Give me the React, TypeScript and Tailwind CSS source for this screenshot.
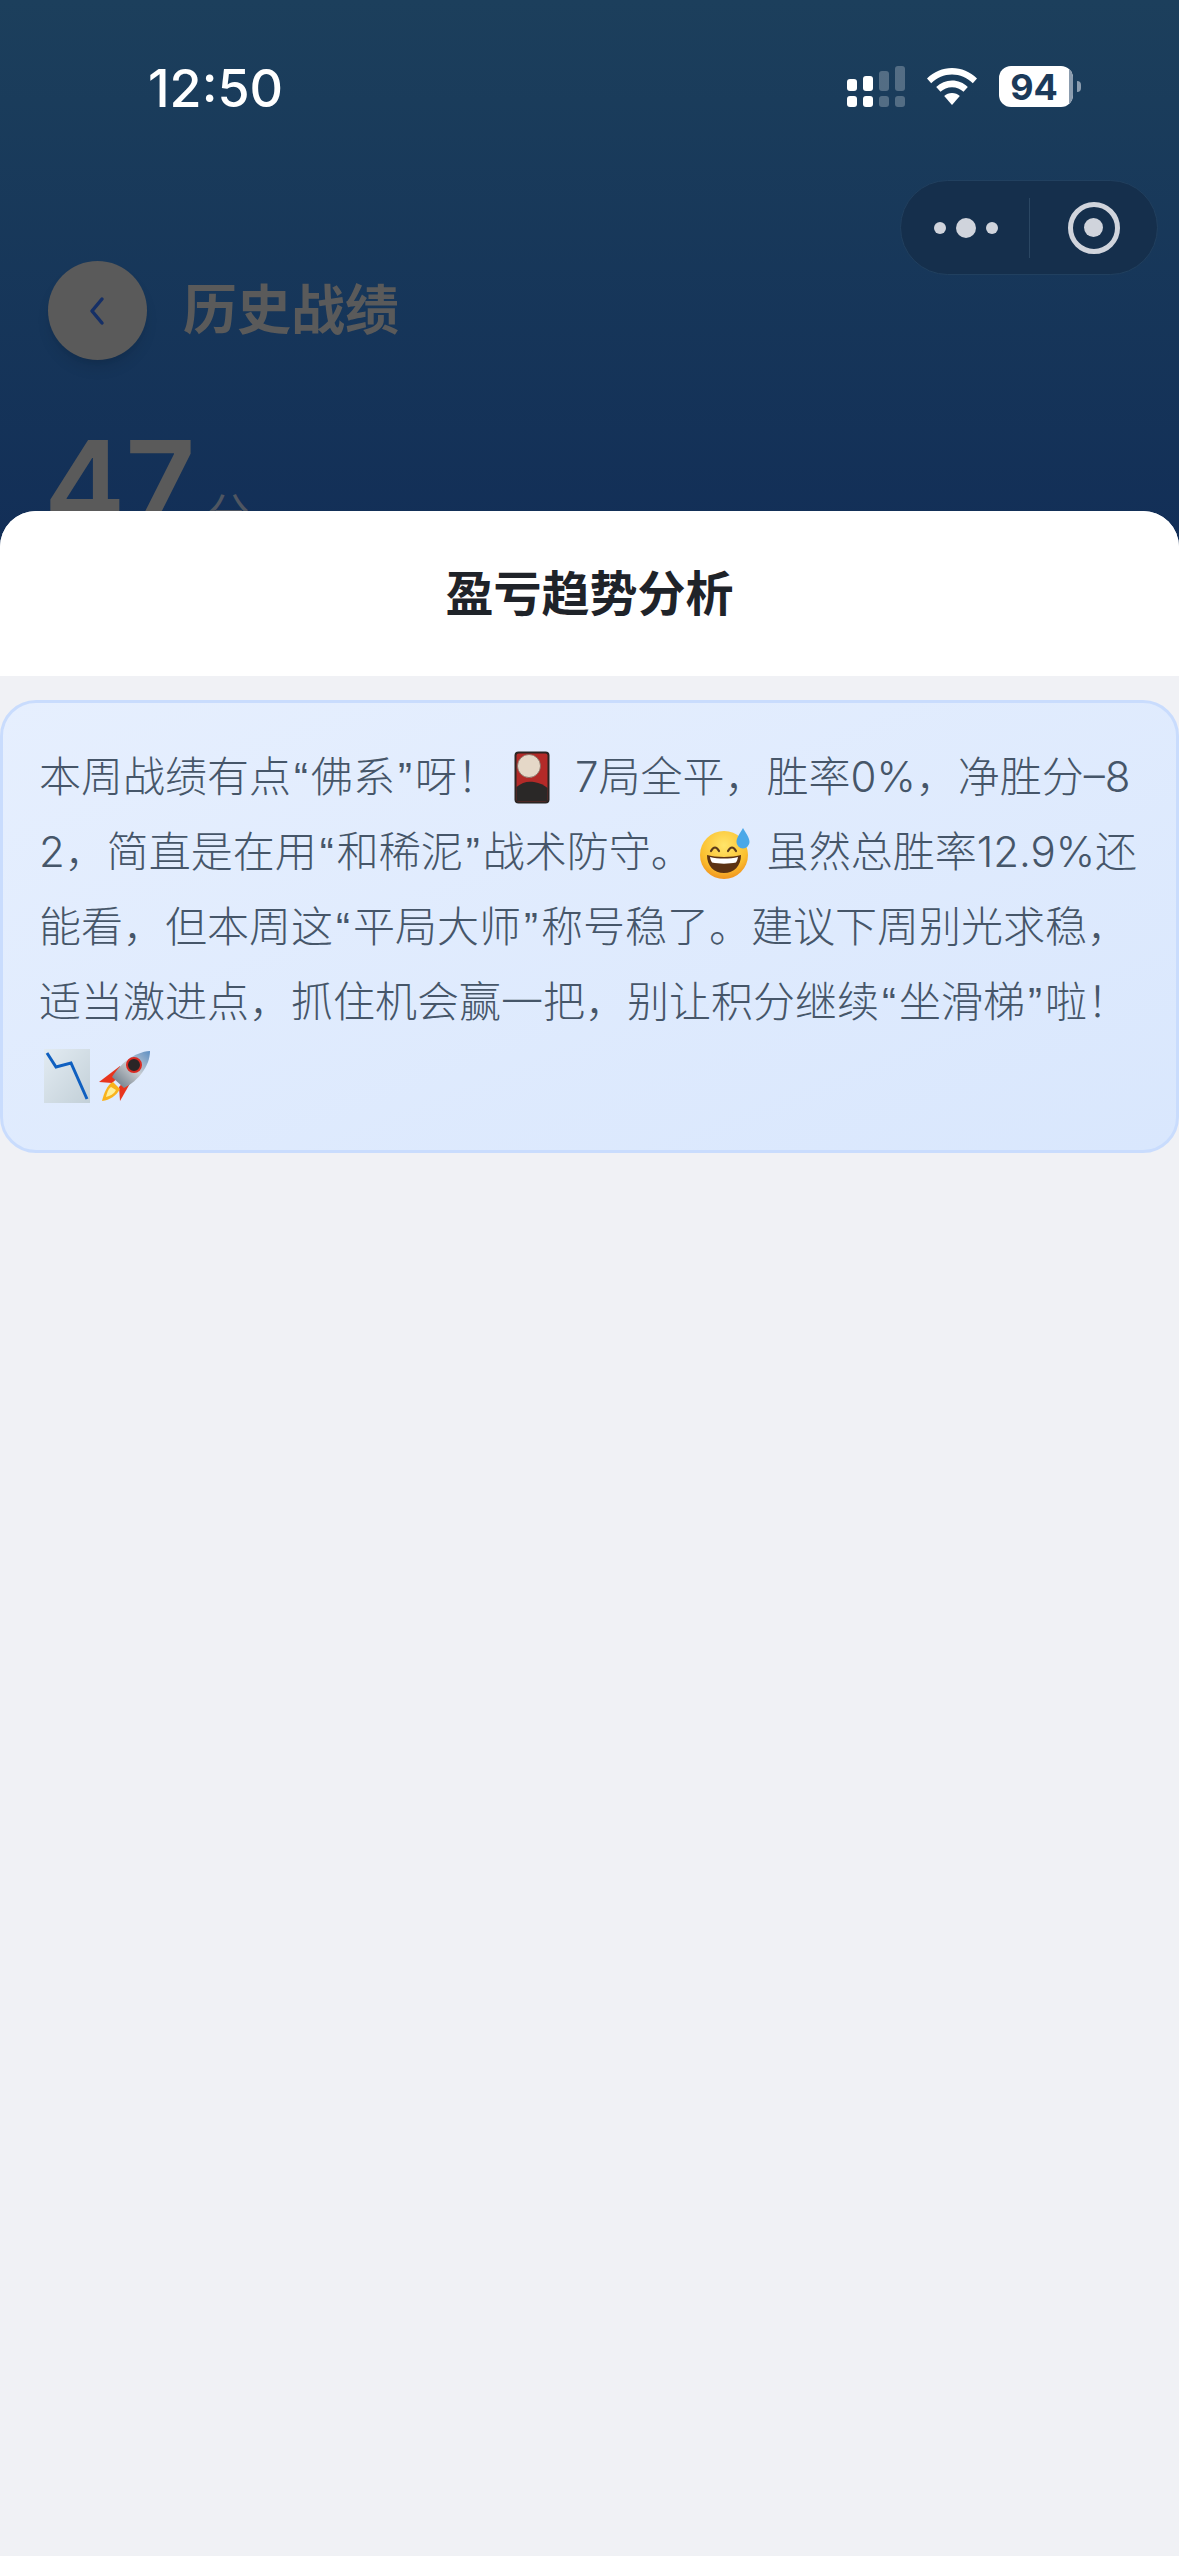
import React from 'react';

const FONT = 'font-[Inter,"Noto_Sans_CJK_SC",sans-serif]';

const SignalIcon = () => (
  <svg width="58" height="41" viewBox="0 0 58 41" fill="#fff">
    <rect x="0" y="13" width="10" height="12" rx="3" />
    <rect x="16" y="10" width="10" height="15" rx="3" />
    <rect x="32" y="5" width="10" height="20" rx="3" opacity="0.25" />
    <rect x="48" y="0" width="10" height="25" rx="3" opacity="0.25" />
    <rect x="0" y="30" width="10" height="11" rx="3" />
    <rect x="16" y="30" width="10" height="11" rx="3" />
    <rect x="32" y="30" width="10" height="11" rx="3" opacity="0.25" />
    <rect x="48" y="30" width="10" height="11" rx="3" opacity="0.25" />
  </svg>
);

const WifiIcon = () => (
  <svg width="50" height="37" viewBox="0 0 50 37" fill="#fff">
    <path d="M25 0C15.500 0 7 3.700 0 10.500l4.200 4.700C10 9.500 17 6.500 25 6.500s15 3 20.800 8.700l4.200-4.700C43 3.700 34.500 0 25 0z" />
    <path d="M25 12.500c-6 0-11.500 2.300-15.800 6.500l4.300 4.800c3-2.900 7-4.600 11.500-4.600s8.500 1.700 11.500 4.600l4.300-4.800C36.500 14.800 31 12.500 25 12.500z" />
    <path d="M25 25c-3 0-5.800 1.100-7.800 3.100L25 37l7.800-8.900C30.800 26.100 28 25 25 25z" />
  </svg>
);

const Battery = () => (
  <div className="flex items-center gap-[4px]">
    <div className="relative flex h-[41px] w-[74px] items-center justify-center overflow-hidden rounded-[12px] bg-white">
      <span className="pr-[4px] text-[36px] leading-none font-bold text-[#1b3a5a]">94</span>
      <div className="absolute top-0 right-0 bottom-0 w-[4px] bg-[#8b9cae]" />
    </div>
    <div className="h-[11px] w-[4px] rounded-r-full bg-[#8b9cae]" />
  </div>
);

const Capsule = () => (
  <div className="absolute top-[180px] left-[900px] flex h-[95px] w-[258px] items-center rounded-full border border-[#21405f] bg-[#152f4c]">
    <div className="flex w-[128px] items-center justify-center gap-[10px] pl-[2px]">
      <span className="h-[12px] w-[12px] rounded-full bg-[#d0d4dc]" />
      <span className="h-[20px] w-[20px] rounded-full bg-[#d0d4dc]" />
      <span className="h-[12px] w-[12px] rounded-full bg-[#d0d4dc]" />
    </div>
    <div className="h-[60px] w-px bg-[#2b4763]" />
    <div className="flex flex-1 items-center justify-center">
      <div className="flex h-[52px] w-[52px] items-center justify-center rounded-full border-[5px] border-[#d0d4dc]">
        <span className="h-[19px] w-[19px] rounded-full bg-[#d0d4dc]" />
      </div>
    </div>
  </div>
);

const Quote = ({ c }: { c: string }) => (
  <span className="inline-block w-[20px] text-center font-['Liberation_Sans'] leading-none">{c}</span>
);

const CardEmoji = () => (
  <svg width="36" height="53" viewBox="0 0 36 53" className="mr-[25px] ml-[15px] inline-block align-[-12px]">
    <rect x="0.500" y="0.500" width="35" height="52" rx="4" fill="#2b2523" />
    <rect x="2.500" y="2.500" width="31" height="48" rx="2" fill="#b32a28" />
    <circle cx="15" cy="15" r="11.500" fill="#e5d8c8" stroke="#7d6a60" strokeWidth="0.800" />
    <path d="M2.500 36C8 31 14 30 20 31c6 1 10 3 13.500 6v11.500a2 2 0 0 1-2 2h-27a2 2 0 0 1-2-2z" fill="#2a2827" />
  </svg>
);

const SweatEmoji = () => (
  <svg width="52" height="56" viewBox="0 0 52 56" className="mr-[3px] ml-[7px] inline-block align-[-13px]">
    <defs>
      <radialGradient id="face" cx="50%" cy="30%" r="75%">
        <stop offset="0%" stopColor="#ffe56a" />
        <stop offset="65%" stopColor="#fbc02f" />
        <stop offset="100%" stopColor="#ee8a1c" />
      </radialGradient>
    </defs>
    <circle cx="24" cy="31" r="24" fill="url(#face)" />
    <path d="M11 27q4-7 8 0M28 27q4-7 8 0" fill="none" stroke="#5b3a1a" strokeWidth="2.200" strokeLinecap="round" />
    <path d="M7 31c8 2.500 26 2.500 34 0 0 11-7 18-17 18S7 42 7 31z" fill="#5c3212" />
    <path d="M10 33c8 2 20 2 28 0-.5 2.500-1 4-2 5.500-7 1.500-17 1.500-24 0-1-1.500-1.500-3-2-5.500z" fill="#fff" />
    <path d="M43 4c2.500 5 6.500 9 6.500 14a6.500 6.500 0 0 1-13 0c0-5 4-9 6.500-14z" fill="#4aa8e8" />
  </svg>
);

const ChartEmoji = () => (
  <svg width="46" height="54" viewBox="0 0 46 54" className="ml-[5px] inline-block align-[-11px]">
    <defs>
      <linearGradient id="paper" x1="0" y1="0" x2="1" y2="1">
        <stop offset="0%" stopColor="#e2ebf2" />
        <stop offset="100%" stopColor="#c3d0d8" />
      </linearGradient>
    </defs>
    <rect width="46" height="54" fill="url(#paper)" />
    <path d="M3 4l9 14 15-4 16 36" fill="none" stroke="#0f5fc0" strokeWidth="3" />
  </svg>
);

const RocketEmoji = () => (
  <svg width="53" height="52" viewBox="0 0 53 52" className="ml-[8px] inline-block align-[-10px]">
    <defs>
      <linearGradient id="hull" x1="0" y1="1" x2="1" y2="0">
        <stop offset="0%" stopColor="#5e6e7c" />
        <stop offset="55%" stopColor="#c9ccd0" />
        <stop offset="100%" stopColor="#5d8fc4" />
      </linearGradient>
    </defs>
    <path d="M22 16L1 32l13 1 8-7z" fill="#e8351e" />
    <path d="M34 30L22 51l-1-14 7-8z" fill="#e8351e" />
    <path d="M15 32c-6 3-9 11-11 19 8-1 14-5 18-12z" fill="#f9b31c" />
    <path d="M13 37c-3 2-4 6-5 10 4-1 8-3 10-7z" fill="#fff09a" />
    <path d="M14 27C22 14 36 2 52 1c0 15-12 30-26 37z" fill="url(#hull)" />
    <circle cx="36" cy="15" r="7" fill="#2b2526" stroke="#d92a22" strokeWidth="2" />
  </svg>
);

export default function App() {
  return (
    <div className={`relative h-[2556px] w-[1179px] overflow-hidden bg-[#f0f1f5] ${FONT}`}>
      {/* page behind the sheet */}
      <div className="h-[560px] bg-gradient-to-b from-[#1c3f5c] to-[#122e57]">
        <div className="flex items-start justify-between pt-[66px] pr-[98px] pl-[148px]">
          <span className="mt-[1px] text-[52px] leading-[44px] font-medium text-white">12:50</span>
          <div className="flex items-center gap-[22px]">
            <SignalIcon />
            <WifiIcon />
            <Battery />
          </div>
        </div>
        <Capsule />

        <div className="mt-[150px] flex items-center gap-[36px] pl-[48px]">
          <div className="flex h-[99px] w-[99px] items-center justify-center rounded-full bg-[#5a5a5a] shadow-lg">
            <svg width="20" height="30" viewBox="0 0 20 30" fill="none" stroke="#152f66" strokeWidth="3.500" strokeLinecap="round" strokeLinejoin="round">
              <path d="M14 3L4 15l10 12" />
            </svg>
          </div>
          <span className="text-[54px] leading-none font-bold text-[#5a5a5a]">历史战绩</span>
        </div>

        <div className="mt-[64px] flex items-baseline gap-[12px] pl-[44px]">
          <span className="text-[122px] leading-none font-semibold text-[#5a5a5a]">47</span>
          <span className="text-[42px] leading-none text-[#4f5661]">分</span>
        </div>
      </div>

      {/* bottom sheet */}
      <div className="absolute top-[511px] right-0 bottom-0 left-0 overflow-hidden rounded-t-[36px] bg-[#f0f1f5]">
        <div className="flex h-[165px] items-center justify-center bg-white">
          <span className="text-[48px] leading-none font-semibold text-[#1f2329]">盈亏趋势分析</span>
        </div>
        <div className="mt-[24px] rounded-[36px] border-[3px] border-[#c9dcfd] bg-gradient-to-br from-[#e6effe] to-[#d9e7fd] pt-[36px] pr-[37px] pb-[36px] pl-[36px] text-[42px] leading-[75px] font-light break-all text-[#465669]">
          本周战绩有点<Quote c="“" />佛系<Quote c="”" />呀！<CardEmoji />7局全平，胜率0%，净胜分–82，简直是在用<Quote c="“" />和稀泥<Quote c="”" />战术防守。<SweatEmoji /> 虽然总胜率12.9%还能看，但本周这<Quote c="“" />平局大师<Quote c="”" />称号稳了。建议下周别光求稳，适当激进点，抓住机会赢一把，别让积分继续<Quote c="“" />坐滑梯<Quote c="”" />啦！<ChartEmoji /><RocketEmoji />
        </div>
      </div>
    </div>
  );
}
